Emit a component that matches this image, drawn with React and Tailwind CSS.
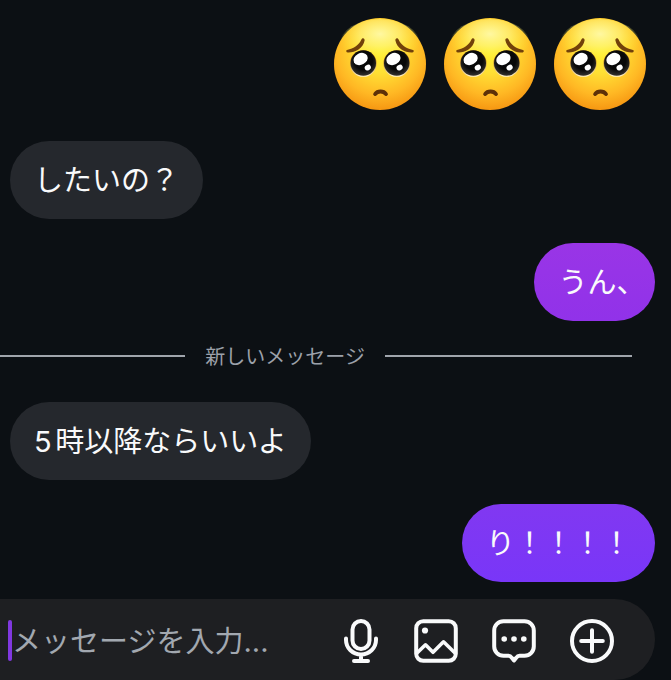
import React, { useState } from 'react';

const messages = [
  { id: 1, from: 'me', type: 'emoji', count: 3 },
  { id: 2, from: 'them', text: 'したいの？' },
  { id: 3, from: 'me', text: 'うん、', color: 'bg-linear-to-b from-[#9935e6] to-[#9132e9] [font-feature-settings:"halt"]' },
  { id: 4, type: 'divider', text: '新しいメッセージ' },
  { id: 5, from: 'them', text: '5時以降ならいいよ' },
  { id: 6, from: 'me', text: 'り！！！！', color: 'bg-linear-to-b from-[#8138f1] to-[#7936f8]' },
];

const PleadingFace = ({ id }) => (
  <svg viewBox="0 0 92 92" className="size-[92px]" role="img" aria-label="pleading face">
    <defs>
      <radialGradient id={`face-${id}`} cx="50%" cy="36%" r="66%">
        <stop offset="0" stopColor="#fff02e" />
        <stop offset="0.35" stopColor="#ffe035" />
        <stop offset="0.72" stopColor="#ffb824" />
        <stop offset="1" stopColor="#f59310" />
      </radialGradient>
      <radialGradient id={`shine-${id}`} cx="50%" cy="30%" r="55%">
        <stop offset="0" stopColor="#fffbb5" stopOpacity="0.85" />
        <stop offset="0.45" stopColor="#fff890" stopOpacity="0.55" />
        <stop offset="1" stopColor="#fff233" stopOpacity="0" />
      </radialGradient>
      <linearGradient id={`rim-${id}`} x1="0" y1="0" x2="0" y2="1">
        <stop offset="0.35" stopColor="#b87a14" />
        <stop offset="1" stopColor="#fff3cf" />
      </linearGradient>
      <radialGradient id={`eye-${id}`} cx="50%" cy="40%" r="60%">
        <stop offset="0.6" stopColor="#080808" />
        <stop offset="1" stopColor="#33312e" />
      </radialGradient>
    </defs>
    <circle cx="46" cy="46" r="46" fill={`url(#face-${id})`} />
    <ellipse cx="46" cy="26" rx="40" ry="25" fill={`url(#shine-${id})`} />
    <g fill="#72410a">
      <path d="M13 32 C20 30.5 25 27 27.4 21.5 C28.4 19.2 31 20 30.6 22.6 C29 30.5 21 34.8 14 34.6 C12 34.4 11.6 32.4 13 32 Z" />
      <path d="M79 32 C72 30.5 67 27 64.6 21.5 C63.6 19.2 61 20 61.4 22.6 C63 30.5 71 34.8 78 34.6 C80 34.4 80.4 32.4 79 32 Z" />
    </g>
    <circle cx="29.3" cy="45.5" r="13.3" fill={`url(#rim-${id})`} />
    <circle cx="62.7" cy="45.5" r="13.3" fill={`url(#rim-${id})`} />
    <circle cx="29.3" cy="45" r="12.7" fill={`url(#eye-${id})`} />
    <circle cx="62.7" cy="45" r="12.7" fill={`url(#eye-${id})`} />
    <g fill="#fff">
      <ellipse cx="26.6" cy="41" rx="7.4" ry="5.8" transform="rotate(-28 26.6 41)" />
      <ellipse cx="59.4" cy="41" rx="7.4" ry="5.8" transform="rotate(-28 59.4 41)" />
      <ellipse cx="33.8" cy="49.6" rx="3.2" ry="2.7" transform="rotate(-30 33.8 49.6)" />
      <ellipse cx="65.6" cy="49.6" rx="3.2" ry="2.7" transform="rotate(-30 65.6 49.6)" />
    </g>
    <path d="M41.2 76 C43.5 72.6 49.6 72.6 51.9 76" fill="none" stroke="#5f3108" strokeWidth="4" strokeLinecap="round" />
  </svg>
);

const iconProps = {
  fill: 'none',
  stroke: 'currentColor',
  strokeWidth: 4,
  strokeLinecap: 'round',
  strokeLinejoin: 'round',
  'aria-hidden': true,
};

const MicIcon = () => (
  <svg viewBox="0 0 38 44" className="h-11 w-[38px]" {...iconProps}>
    <rect x="10.5" y="2" width="17" height="28" rx="8.5" />
    <path d="M4 19.5V21a15 14.5 0 0 0 30 0v-1.5M19 35.5V42M12 42h14" />
  </svg>
);

const ImageIcon = () => (
  <svg viewBox="0 0 44 44" className="size-11" {...iconProps}>
    <rect x="2.2" y="2.2" width="39.6" height="39.6" rx="7" />
    <circle cx="11" cy="11.5" r="3.1" fill="currentColor" stroke="none" />
    <path d="M3 34l8.5-8.2 7.5 7.5L29.5 22.8 41 34" strokeWidth="3.6" />
  </svg>
);

const StickerIcon = () => (
  <svg viewBox="0 0 44 44" className="size-11" {...iconProps}>
    <path d="M11.5 2.2h21a9.3 9.3 0 0 1 9.3 9.3v16a9.3 9.3 0 0 1-9.3 9.3H27.5c-1.6 0-2.3.6-3.3 2L22 41.5l-2.2-2.7c-1-1.4-1.7-2-3.3-2h-5a9.3 9.3 0 0 1-9.3-9.3v-16a9.3 9.3 0 0 1 9.3-9.3Z" />
    <g fill="currentColor" stroke="none">
      <circle cx="12.2" cy="20" r="2.8" />
      <circle cx="22" cy="20" r="2.8" />
      <circle cx="31.8" cy="20" r="2.8" />
    </g>
  </svg>
);

const PlusIcon = () => (
  <svg viewBox="0 0 44 44" className="size-11" {...iconProps}>
    <circle cx="22" cy="22" r="20" />
    <path d="M22 11.2v21.6M11.2 22h21.6" />
  </svg>
);

const actions = [
  { label: '音声', Icon: MicIcon },
  { label: '写真', Icon: ImageIcon },
  { label: 'スタンプ', Icon: StickerIcon },
  { label: '追加', Icon: PlusIcon },
];

const Divider = ({ text }) => (
  <div className="mt-[19px] mb-[30px] mr-[39px] flex h-8 items-center gap-5 text-xl text-[#9ca1aa]">
    <span className="h-0.5 flex-3 bg-[#a0a5ac]"></span>
    <span className="pt-0.5">{text}</span>
    <span className="h-0.5 flex-4 bg-[#a0a5ac]"></span>
  </div>
);

const Message = ({ message }) => {
  if (message.type === 'divider') return <Divider text={message.text} />;

  if (message.type === 'emoji') {
    return (
      <div className="mb-[31px] flex justify-end gap-[18px] pr-[25px]">
        {Array.from({ length: message.count }, (_, i) => (
          <PleadingFace key={i} id={i} />
        ))}
      </div>
    );
  }

  const mine = message.from === 'me';
  return (
    <div className={`flex pr-4 pl-2.5 ${mine ? 'mt-6 justify-end' : 'justify-start'}`}>
      <p className={`flex h-[78px] items-center rounded-full px-6 pt-0.5 text-[29px] text-[#f9fafb] ${mine ? message.color : 'bg-[#25282d]'}`}>
        {message.text}
      </p>
    </div>
  );
};

const App = () => {
  const [draft, setDraft] = useState('');

  return (
    <div className='flex min-h-screen flex-col bg-[#0c1014] font-["Inter","Noto_Sans_CJK_JP",sans-serif] [text-autospace:normal]' lang="ja">
      <main className="flex-1 pt-[18px] pb-[17px]">
        {messages.map((m) => (
          <Message key={m.id} message={m} />
        ))}
      </main>

      <form
        className="mr-4 flex h-[81px] items-center rounded-r-full bg-[#1e1f22] pt-0.5 pr-[41px] pl-2"
        onSubmit={(e) => e.preventDefault()}
      >
        <span className="h-[41px] w-1 shrink-0 rounded-full bg-[#8038e0]"></span>
        <input
          type="text"
          aria-label="メッセージ"
          placeholder="メッセージを入力..."
          value={draft}
          onChange={(e) => setDraft(e.target.value)}
          className="h-16 min-w-0 flex-1 bg-transparent pt-0.5 text-[29px] text-white outline-none placeholder:text-[#a2a8b0]"
        />
        <div className="flex shrink-0 items-center gap-[34px] text-[#f9fafb]">
          {actions.map(({ label, Icon }) => (
            <button key={label} type="button" aria-label={label}>
              <Icon />
            </button>
          ))}
        </div>
      </form>
    </div>
  );
};

export default App;
